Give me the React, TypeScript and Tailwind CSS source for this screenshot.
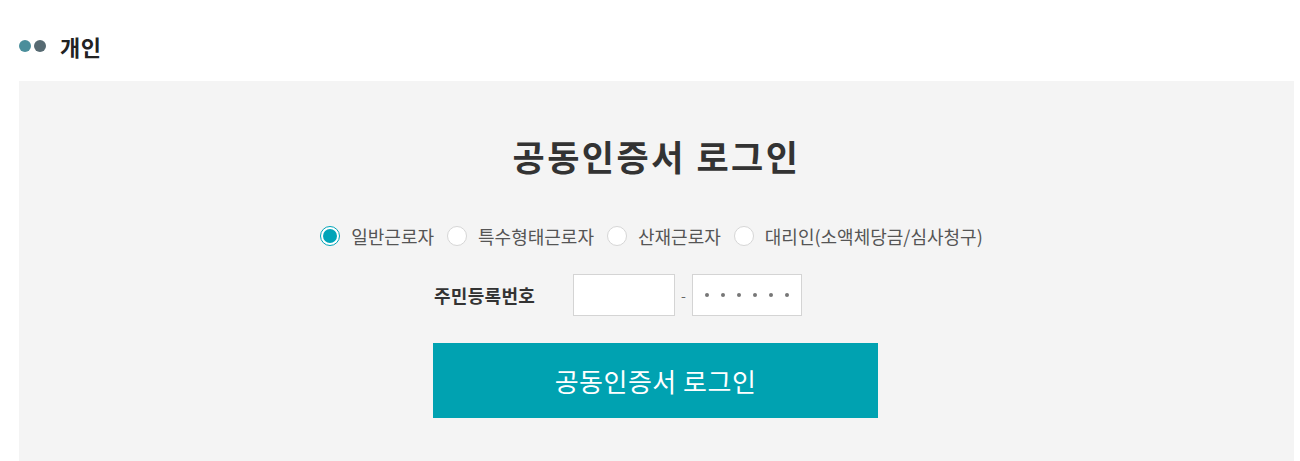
import React from "react";

const font = { fontFamily: '"Noto Sans CJK KR", "Noto Sans", sans-serif' };

function Radio({ label, checked }: { label: string; checked?: boolean }) {
  return (
    <label className="flex items-center gap-[11px]">
      {checked ? (
        <span className="w-[20px] h-[20px] rounded-full border border-[#00a4b8] flex items-center justify-center bg-white">
          <span className="w-[14px] h-[14px] rounded-full bg-[#00a4b8]" />
        </span>
      ) : (
        <span className="w-[20px] h-[20px] rounded-full border border-[#d6d6d6] bg-white" />
      )}
      <span className="text-[18px] text-[#555] leading-none">{label}</span>
    </label>
  );
}

export default function App() {
  return (
    <div className="w-[1300px] h-[461px] bg-white overflow-hidden" style={font}>
      <div className="flex items-center h-[81px] pl-[19px] pt-[10px]">
        <div className="flex items-center gap-[3px] mr-[14px]">
          <span className="w-[12px] h-[12px] rounded-full bg-[#4a8e9b]" />
          <span className="w-[12px] h-[12px] rounded-full bg-[#566a72]" />
        </div>
        <span className="text-[22px] font-bold text-[#222] leading-none tracking-[0.5px]">개인</span>
      </div>
      <div className="ml-[19px] w-[1275px] h-[380px] bg-[#f4f4f4] flex flex-col items-center pt-[57px]">
        <h2 className="text-[35px] font-bold text-[#333] leading-none tracking-[2.5px]">공동인증서 로그인</h2>
        <div className="flex items-center gap-[13px] mt-[53px] ml-[-10px]">
          <Radio label="일반근로자" checked />
          <Radio label="특수형태근로자" />
          <Radio label="산재근로자" />
          <Radio label="대리인(소액체당금/심사청구)" />
        </div>
        <div className="w-[445px] mt-[28px] ml-[-2px]">
          <div className="flex items-center pl-[1px]">
            <span className="w-[139px] text-[18px] font-bold text-[#333] leading-none tracking-[0.3px]">주민등록번호</span>
            <div className="w-[102px] h-[42px] bg-white border border-[#d4d4d4]" />
            <span className="w-[17px] text-center text-[#666] text-[14px]">-</span>
            <div className="w-[110px] h-[42px] bg-white border border-[#d4d4d4] flex items-center justify-center gap-[12px]">
              {[0, 1, 2, 3, 4, 5].map((i) => (
                <span key={i} className="w-[4px] h-[4px] rounded-full bg-[#777]" />
              ))}
            </div>
          </div>
          <button className="mt-[27px] w-[445px] h-[75px] bg-[#00a2b1] text-white text-[26px] leading-none tracking-[0.5px] flex items-center justify-center">
            공동인증서 로그인
          </button>
        </div>
      </div>
    </div>
  );
}
